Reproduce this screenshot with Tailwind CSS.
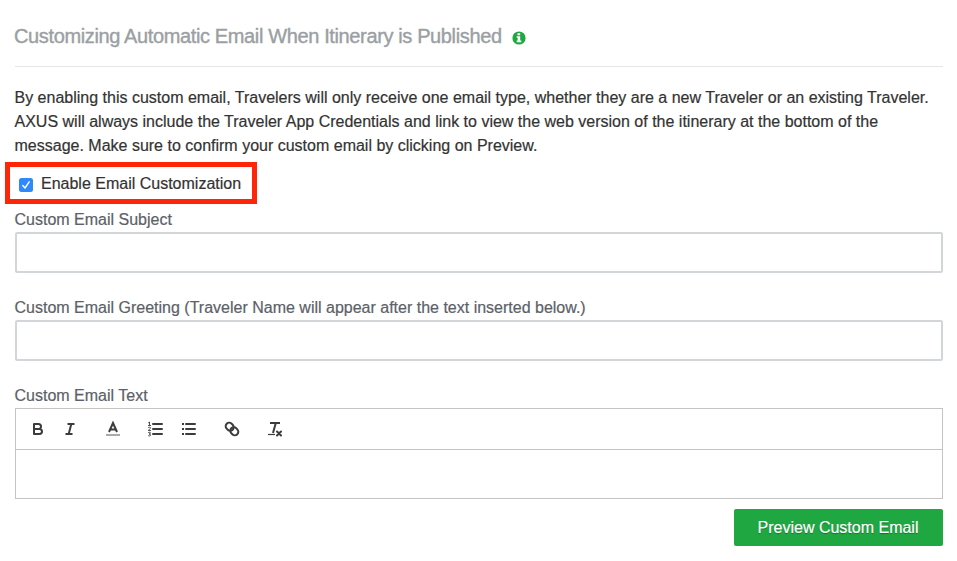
<!DOCTYPE html>
<html lang="en">
<head>
<meta charset="utf-8">
<title>Email customization</title>
<script src="https://cdn.jsdelivr.net/npm/@tailwindcss/browser@4"></script>
</head>
<body class="bg-white font-['Liberation_Sans',Arial,sans-serif] text-base leading-6 text-[#333] overflow-hidden [-webkit-text-stroke:0.2px_currentColor]">
<main class="flex flex-col pl-[15px] pr-[14px] h-[561px]">
  <header class="flex items-center h-[67px] pt-[6px] border-b border-[#e5e6e7]">
    <h1 class="-ml-px text-[20px] leading-6 tracking-[-0.37px] text-[#9b9fa4] whitespace-nowrap [-webkit-text-stroke:0.4px_currentColor]">Customizing Automatic Email When Itinerary is Published</h1>
    <svg class="ml-[10px] mt-[3px] w-[14px] h-[14px] shrink-0" viewBox="0 0 14 14"><circle cx="7" cy="7" r="6.6" fill="#1fa842"/><path fill="#fff" d="M5.500 2.200h2.700v2H5.500zM4.700 5.200h3.500v4.200H9.300v1.800H4.700V9.400h1V6.800h-1z"/></svg>
  </header>
  <p class="-ml-[0.5px] mt-[19px] whitespace-nowrap">By enabling this custom email, Travelers will only receive one email type, whether they are a new Traveler or an existing Traveler.<br>AXUS will always include the Traveler App Credentials and link to view the web version of the itinerary at the bottom of the<br>message. Make sure to confirm your custom email by clicking on Preview.</p>
  <label class="flex items-center -ml-[10px] mt-[4px] w-[252px] h-[42px] border-[5px] border-[#ff2508] pl-[9px] pt-px whitespace-nowrap">
    <svg class="w-[14px] h-[14px] mt-[2px] mr-[8px] shrink-0" viewBox="0 0 14 14"><rect width="14" height="14" rx="2.5" fill="#3089f8"/><path d="M3.800 7.500 6 10l4.200-6.200" fill="none" stroke="#fff" stroke-width="1.400" stroke-linecap="round" stroke-linejoin="round"/></svg>
    <span>Enable Email Customization</span>
  </label>
  <label class="mt-[4px] text-[#5c6168]"><span class="block -ml-[0.5px]">Custom Email Subject</span>
    <input class="block w-full h-[41px] border-2 border-[#d3d6d9] rounded-[2px]"></label>
  <label class="mt-[23px] text-[#5c6168]"><span class="block -ml-[0.5px] whitespace-nowrap">Custom Email Greeting (Traveler Name will appear after the text inserted below.)</span>
    <input class="block w-full h-[41px] border-2 border-[#d3d6d9] rounded-[2px]"></label>
  <div class="-ml-[0.5px] mt-[23px] text-[#5c6168]">Custom Email Text</div>
  <section class="h-[91px] border border-[#c4c4c4]">
    <div class="flex items-center h-[41px] border-b border-[#c4c4c4] pl-[13px] text-[#3c3c3c]">
      <svg class="w-[18px] h-[18px]" viewBox="0 0 18 18" fill="none" stroke="currentColor" stroke-width="2" stroke-linejoin="round"><path d="M5 4h4.500a2.500 2.500 0 0 1 0 5H5zM5 9h5.500a2.500 2.500 0 0 1 0 5H5z"/></svg>
      <svg class="w-[18px] h-[18px] ml-[14px]" viewBox="0 0 18 18" fill="none" stroke="currentColor" stroke-width="2"><path d="M6.500 4h7M4.500 14h7M10.300 4 7.700 14"/></svg>
      <svg class="w-[18px] h-[18px] ml-[25px]" viewBox="0 0 18 18" fill="none" stroke="currentColor"><path d="M2 15h14" stroke="#aaa" stroke-width="2"/><path d="M5 12 9 3l4 9M6.400 9.500h5.200" stroke-width="2"/></svg>
      <svg class="w-[18px] h-[18px] ml-[25px]" viewBox="0 0 18 18" fill="none" stroke="currentColor"><path d="M6 4h9M6 9h9M6 14h9" stroke-width="2" stroke-linecap="round"/><path d="M1.200 2.900 2.500 2v3.500M1 5.500h3M1.200 7.700C2 7 3.600 7 3.500 8S2 9.500 1.200 10.500H4M1.200 12.600c1-.6 2.400-.4 2.300.4S2.600 14 2 14c1 0 1.700.3 1.600 1.200s-1.500.9-2.400.4" stroke-width=".9"/></svg>
      <svg class="w-[18px] h-[18px] ml-[15px]" viewBox="0 0 18 18" fill="none" stroke="currentColor" stroke-width="2"><path d="M6 4h9M6 9h9M6 14h9" stroke-linecap="round"/><path d="M2 4h2M2 9h2M2 14h2"/></svg>
      <svg class="w-[18px] h-[18px] ml-[25px]" viewBox="0 0 18 18" fill="none" stroke="currentColor" stroke-width="2"><g transform="rotate(45 9 9)"><rect x="1.500" y="5.500" width="8.500" height="7" rx="3.500"/><rect x="8" y="5.500" width="8.500" height="7" rx="3.500"/></g></svg>
      <svg class="w-[18px] h-[18px] ml-[25px]" viewBox="0 0 18 18" fill="none" stroke="currentColor"><path d="M4 3h10M9.800 3 7 13" stroke-width="2"/><path d="M2 14.500h7" stroke-width="1.200"/><path d="m11 11.500 4 4M15 11.500l-4 4" stroke-width="2" stroke-linecap="round"/></svg>
    </div>
  </section>
  <button class="self-end mt-[10px] pr-px w-[209px] h-[37px] rounded-[2px] bg-[#1fa842] text-white whitespace-nowrap [text-shadow:0_1px_1px_rgba(0,0,0,.35)]">Preview Custom Email</button>
</main>
</body>
</html>
